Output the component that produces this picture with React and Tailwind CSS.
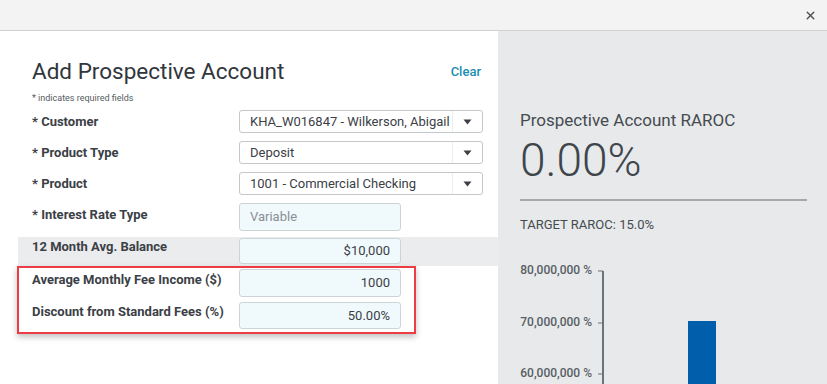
import { X } from 'lucide-react'

// ── Form pieces ──────────────────────────────────────
const Label = ({ children, className = '' }) => (
  <div className={`w-[207px] shrink-0 text-[13px] font-bold text-[#3b4046] ${className}`}>
    {children}
  </div>
)

const Select = ({ value }) => (
  <div className="flex h-[23px] w-[244px] items-center rounded-[3px] border border-[#c3c8cc] bg-white">
    <span className="flex-1 truncate pl-[10px] text-[13px] text-[#3b4046]">{value}</span>
    <span className="flex h-full w-[30px] items-center justify-center border-l border-[#eceeef]">
      <svg width="9" height="6" viewBox="0 0 9 6">
        <path d="M0.5 0.5 L8.5 0.5 L4.5 5.5 Z" fill="#3b4046" />
      </svg>
    </span>
  </div>
)

const Field = ({ value, placeholder, h = 'h-[28px]' }) => (
  <div
    className={`flex ${h} w-[162px] items-center rounded-[3px] border border-[#cdd4d8] bg-[#f0f9fc] px-[10px] text-[13px] ${
      placeholder ? 'justify-start text-[#8a9095]' : 'justify-end text-[#3b4046]'
    }`}
  >
    {value}
  </div>
)

const Row = ({ label, children, className = '', labelClass = '' }) => (
  <div className={`flex items-start ${className}`}>
    <Label className={labelClass}>{label}</Label>
    {children}
  </div>
)

// ── Chart ──────────────────────────────────────
const ticks = [
  { y: 29, t: '80,000,000 %' },
  { y: 81, t: '70,000,000 %' },
  { y: 132, t: '60,000,000 %' },
]

const RarocChart = () => (
  <svg width="330" height="144" viewBox="0 0 330 144" className="block">
    {ticks.map((r) => (
      <g key={r.t}>
        <text
          x="94"
          y={r.y + 4}
          textAnchor="end"
          fontSize="12"
          fontWeight="500"
          fill="#585e63"
          fontFamily="Roboto, sans-serif"
        >
          {r.t}
        </text>
        <line x1="100" x2="105" y1={r.y + 1} y2={r.y + 1} stroke="#6b7378" strokeWidth="1" />
      </g>
    ))}
    <line x1="105" x2="105" y1="30" y2="144" stroke="#6b7378" strokeWidth="2" />
    <rect x="190" y="80" width="28" height="64" fill="#005eaa" />
  </svg>
)

export default function App() {
  return (
    <div
      className="flex h-[384px] w-[827px] flex-col overflow-hidden bg-white"
      style={{ fontFamily: 'Roboto, "Liberation Sans", sans-serif' }}
    >
      {/* top bar */}
      <div className="flex h-[31px] shrink-0 items-center justify-end border-b border-[#cfd2d4] bg-[#f3f3f3] pr-[10px]">
        <X size={13} strokeWidth={2.6} className="text-[#4a4f54]" />
      </div>

      <div className="flex flex-1">
        {/* ── left: form ── */}
        <div className="w-[498px] shrink-0 bg-white pl-[32px]">
          <div className="mt-[25px] flex h-[30px] items-center justify-between pr-[17px]">
            <h1 className="text-[22.5px] leading-[30px] text-[#30363b]">Add Prospective Account</h1>
            <a className="pt-[2px] text-[13px] font-medium text-[#1a8db0]">Clear</a>
          </div>
          <p className="mt-[6px] text-[9px] leading-[12px] text-[#555b60]">* indicates required fields</p>

          <Row label="* Customer" className="mt-[6px]" labelClass="leading-[23px]">
            <Select value="KHA_W016847 - Wilkerson, Abigail" />
          </Row>
          <Row label="* Product Type" className="mt-[8px]" labelClass="leading-[23px]">
            <Select value="Deposit" />
          </Row>
          <Row label="* Product" className="mt-[8px]" labelClass="leading-[23px]">
            <Select value="1001 - Commercial Checking" />
          </Row>
          <Row label="* Interest Rate Type" className="mt-[8px]" labelClass="leading-[23px]">
            <Field value="Variable" placeholder />
          </Row>

          {/* shaded row */}
          <div className="-ml-[14px] mt-[6px] h-[29px] bg-[#ebeced] pl-[14px] pt-[1px]">
            <Row label="12 Month Avg. Balance" labelClass="leading-[18px]">
              <Field value="$10,000" h="h-[26px]" />
            </Row>
          </div>

          {/* highlighted rows */}
          <div className="-ml-[15px] flex w-[399px] flex-col gap-[5px] border-2 border-[#ec3c46] pb-[3px] pl-[13px] pt-[1px] shadow-[0_3px_6px_rgba(0,0,0,0.25)]">
            <Row label="Average Monthly Fee Income ($)" labelClass="leading-[22px]">
              <Field value="1000" />
            </Row>
            <Row label="Discount from Standard Fees (%)" labelClass="leading-[20px]">
              <Field value="50.00%" h="h-[27px]" />
            </Row>
          </div>
        </div>

        {/* ── right: RAROC ── */}
        <div className="flex-1 bg-[#e7e9eb] pl-[22px]">
          <h2 className="mt-[78px] text-[17px] leading-[22px] text-[#454b50]">Prospective Account RAROC</h2>
          <div className="mt-[3px] text-[46px] font-light leading-[52px] text-[#3e454b]">0.00%</div>
          <div className="mt-[13px] mr-[21px] h-[2px] bg-[#a4a8ac]" />
          <div className="mt-[16px] text-[13px] leading-[16px] text-[#454b50]">TARGET RAROC: 15.0%</div>
          <div className="-ml-[22px] mt-[8px]">
            <RarocChart />
          </div>
        </div>
      </div>
    </div>
  )
}
